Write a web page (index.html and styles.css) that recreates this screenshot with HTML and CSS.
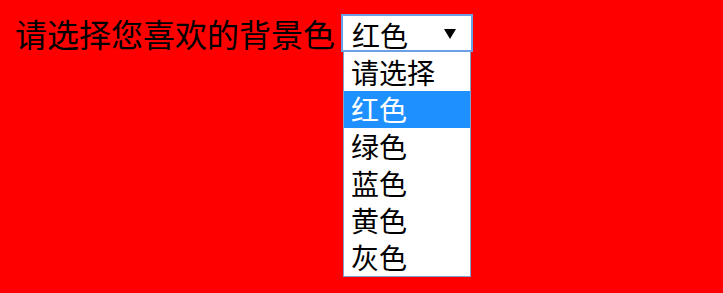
FILE: index.html
```html
<!DOCTYPE html>
<html lang="zh-CN">
<head>
<meta charset="utf-8">
<title>背景色</title>
<link rel="stylesheet" href="styles.css">
</head>
<body>
<div class="row">
  <label class="label">请选择您喜欢的背景色</label>
  <div class="picker">
    <div class="select">
      <span class="value">红色</span>
      <svg class="arrow" width="12" height="10" viewBox="0 0 12 10" aria-hidden="true"><polygon points="0,0 12,0 6,10" fill="#000"/></svg>
    </div>
    <ul class="list">
      <li class="opt">请选择</li>
      <li class="opt active">红色</li>
      <li class="opt">绿色</li>
      <li class="opt">蓝色</li>
      <li class="opt">黄色</li>
      <li class="opt">灰色</li>
    </ul>
  </div>
</div>
</body>
</html>
```
FILE: styles.css
```css
html, body {
  margin: 0;
  padding: 0;
  background: #ff0000;
  height: 100%;
}
body {
  font-family: "Noto Sans CJK SC", "Noto Sans", sans-serif;
  color: #000;
}
.row {
  display: flex;
  align-items: center;
  padding: 14px 0 0 15px;
  gap: 6px;
}
.label {
  font-size: 32px;
  line-height: 38px;
}
.picker {
  position: relative;
}
.select {
  box-sizing: border-box;
  width: 132px;
  height: 38px;
  border: 2px solid #6b9fe6;
  background: #fff;
  display: flex;
  align-items: center;
  padding: 0 15px 0 9px;
}
.value {
  flex: 1;
  font-size: 28px;
  line-height: 34px;
  padding-top: 4px;
}
.arrow {
  display: block;
  margin-top: 2px;
}
.list {
  position: absolute;
  top: 38px;
  left: 2px;
  box-sizing: border-box;
  width: 128px;
  margin: 0;
  padding: 2px 0 0 0;
  list-style: none;
  background: #fff;
  border: 1px solid #7f9fcc;
  border-top: none;
}
.opt {
  font-size: 28px;
  height: 37px;
  line-height: 37px;
  padding-left: 7px;
  white-space: nowrap;
}
.active {
  background: #1e90ff;
  color: #fff;
}
```
